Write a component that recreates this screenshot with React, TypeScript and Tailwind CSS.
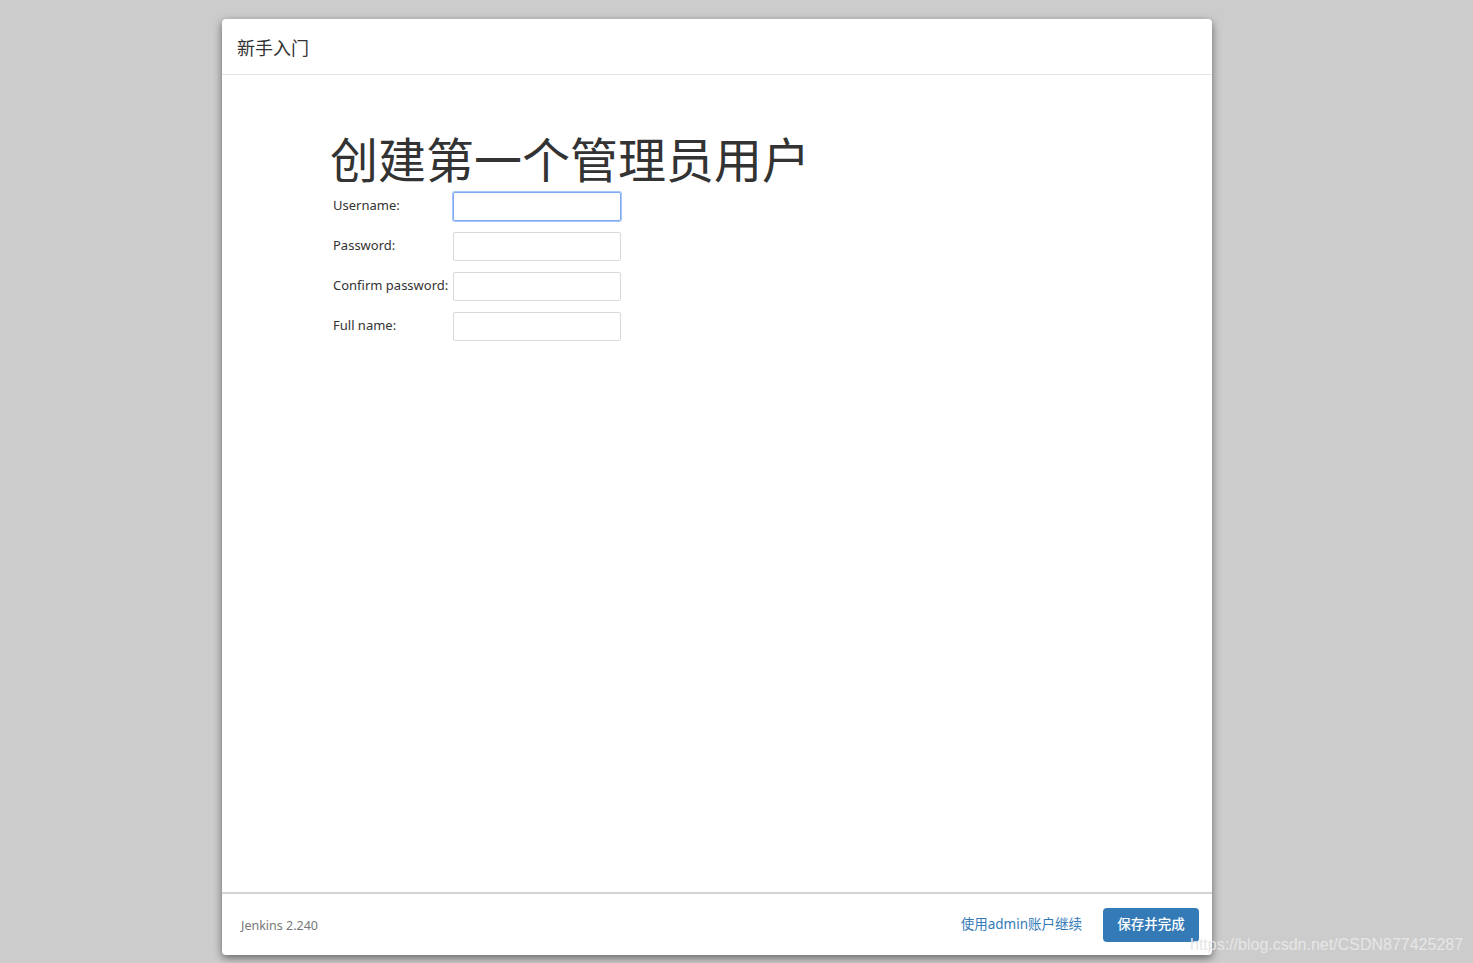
import React from "react";

const font = { fontFamily: '"Noto Sans", "Noto Sans CJK SC", sans-serif' };

const fields = ["Username:", "Password:", "Confirm password:", "Full name:"];

export default function App() {
  return (
    <div className="relative h-[963px] w-full overflow-hidden bg-[#cccccc] pt-[19px]" style={font}>
      <div className="ml-[222px] flex h-[936px] w-[990px] flex-col rounded-[4px] bg-white shadow-[0_3px_9px_rgba(0,0,0,0.5)]">
        <div className="flex h-[56px] items-center border-b border-[#e5e5e5] px-[15px] pt-[2px]">
          <h4 className="text-[18px] leading-none text-[#333]">新手入门</h4>
        </div>

        <div className="flex-1 pl-[108px] pt-[59px]">
          <h1 className="text-[48px] leading-[1.1] text-[#333]">创建第一个管理员用户</h1>
          <div className="mt-[5px] flex flex-col gap-[11px] pl-[3px]">
            {fields.map((f, i) => (
              <div key={f} className="flex items-center">
                <label className="w-[120px] pb-[1px] text-[13px] text-[#333]">{f}</label>
                <input
                  type={i === 1 || i === 2 ? "password" : "text"}
                  className={
                    i === 0
                      ? "h-[29px] w-[168px] rounded-[2px] border border-[#7ea9f2] shadow-[0_0_0_1px_#a8c6fa] outline-none"
                      : "h-[29px] w-[168px] rounded-[2px] border border-[#d9d9d9] outline-none"
                  }
                />
              </div>
            ))}
          </div>
        </div>

        <div className="flex h-[63px] items-center justify-between border-t-2 border-[#d4d4d4] pl-[19px] pr-[13px]">
          <span className="mt-[4px] text-[12.5px] text-[#777]">Jenkins 2.240</span>
          <div className="flex items-center gap-[21px]">
            <a className="text-[13.5px] text-[#337ab7]">使用admin账户继续</a>
            <button className="h-[34px] w-[96px] rounded-[4px] bg-[#337ab7] text-[13.5px] font-medium text-white">
              保存并完成
            </button>
          </div>
        </div>
      </div>

      <div
        className="absolute left-[1190px] top-[933px] text-[16px] text-[#e6e6e6]"
        style={{ fontFamily: '"Liberation Sans", Arial, sans-serif' }}
      >
        https://blog.csdn.net/CSDN877425287
      </div>
    </div>
  );
}
